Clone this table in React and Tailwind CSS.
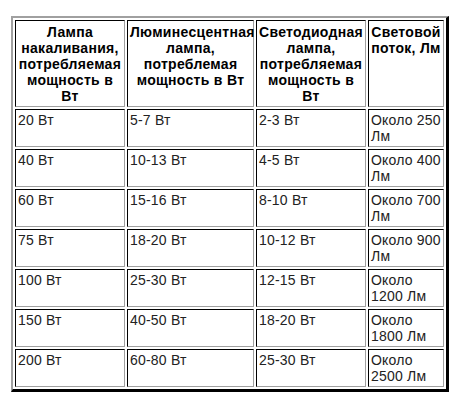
const head = [
  ["Лампа", "накаливания,", "потребляемая", "мощность в", "Вт"],
  ["Люминесцентная", "лампа,", "потреблемая", "мощность в Вт"],
  ["Светодиодная", "лампа,", "потребляемая", "мощность в", "Вт"],
  ["Световой", "поток, Лм"],
];

const rows = [
  ["20 Вт", "5-7 Вт", "2-3 Вт", "Около 250 Лм"],
  ["40 Вт", "10-13 Вт", "4-5 Вт", "Около 400 Лм"],
  ["60 Вт", "15-16 Вт", "8-10 Вт", "Около 700 Лм"],
  ["75 Вт", "18-20 Вт", "10-12 Вт", "Около 900 Лм"],
  ["100 Вт", "25-30 Вт", "12-15 Вт", "Около 1200 Лм"],
  ["150 Вт", "40-50 Вт", "18-20 Вт", "Около 1800 Лм"],
  ["200 Вт", "60-80 Вт", "25-30 Вт", "Около 2500 Лм"],
];

const cell =
  "border border-t-black border-l-black border-r-[#a0a0a0] border-b-[#a0a0a0] px-[2px] py-[2px] leading-[16px] text-[14px]";

export default function App() {
  return (
    <div
      className="w-[460px] h-[404px] bg-white overflow-hidden pt-[16px] pl-[11px]"
      style={{ fontFamily: '"Liberation Sans", Arial, sans-serif' }}
    >
      <div className="inline-block border-t-2 border-l-2 border-[#a0a0a0] border-r-[3px] border-b-[3px] border-r-black border-b-black p-[2px]">
        <div className="grid grid-cols-[110px_127px_110px_76px] grid-rows-[87px_repeat(7,38px)] gap-[2px]">
          {head.map((lines, i) => (
            <div
              key={i}
              className={`${cell} font-bold text-center text-black tracking-[0.3px] pt-[3px]`}
            >
              {lines.map((l, k) => (
                <div key={k} className="whitespace-nowrap">
                  {l}
                </div>
              ))}
            </div>
          ))}
          {rows.map((r, i) =>
            r.map((c, j) => (
              <div key={`${i}-${j}`} className={`${cell} text-[#222] tracking-[0.2px]`}>
                {c}
              </div>
            ))
          )}
        </div>
      </div>
    </div>
  );
}
